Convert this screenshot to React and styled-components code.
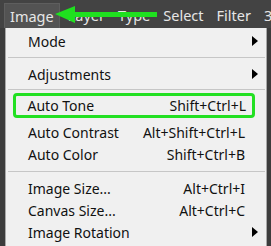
import React from "react";
import styled, { createGlobalStyle } from "styled-components";

const Global = createGlobalStyle`
  html, body { margin: 0; padding: 0; background: #3c3c3c; }
  body { width: 271px; height: 246px; overflow: hidden; font-family: "Noto Sans", "Open Sans", sans-serif; }
`;

const Screen = styled.div`
  position: relative;
  width: 271px;
  height: 246px;
  background: #3c3c3c;
  overflow: hidden;
`;

const MenuBar = styled.div`
  display: flex;
  align-items: center;
  height: 28px;
  padding-left: 4px;
  background: #434343;
  gap: 13px;
  white-space: nowrap;
  overflow: hidden;
`;

const BarItem = styled.div`
  height: 24px;
  margin-top: 2px;
  display: flex;
  align-items: center;
  flex-shrink: 0;
  padding: 0 ${(p) => (p.$active ? 5 : 0)}px;
  margin-right: ${(p) => (p.$active ? -5 : 0)}px;
  color: #e6e6e6;
  font-size: 14.5px;
  background: ${(p) => (p.$active ? "#535353" : "transparent")};
  border: 1px solid ${(p) => (p.$active ? "#5e5e5e" : "transparent")};
  border-bottom: none;
  ${(p) => !p.$active && "border: none;"}
`;

const Menu = styled.div`
  margin-left: 5px;
  width: 262px;
  box-sizing: border-box;
  background: #f0f0f0;
  border: 1px solid #a8a8a8;
  border-top: none;
  padding-top: 2px;
  height: 220px;
`;

const Row = styled.div`
  height: 22px;
  display: flex;
  align-items: center;
  padding-left: 22px;
  padding-right: 21px;
  font-size: 14px;
  color: #111;
  position: relative;
`;

const Label = styled.span`
  flex: 1;
  white-space: nowrap;
`;

const Shortcut = styled.span`
  white-space: nowrap;
`;

const Arrow = styled.span`
  position: absolute;
  right: 8px;
  top: 6px;
  width: 0;
  height: 0;
  border-top: 5px solid transparent;
  border-bottom: 5px solid transparent;
  border-left: 6px solid #000;
`;

const Separator = styled.div`
  height: ${(p) => p.$h}px;
  display: flex;
  align-items: center;
  padding: 0 1px 0 2px;
  box-sizing: border-box;
  &::after {
    content: "";
    flex: 1;
    height: 1px;
    background: #c6c6c6;
  }
`;

const Highlight = styled.div`
  margin: 0 11px 3px 7px;
  height: 25px;
  box-sizing: border-box;
  border: 3.5px solid #22e022;
  border-radius: 4px;
  display: flex;
  align-items: center;
  padding-left: 11.5px;
  padding-right: 6px;
  font-size: 14px;
  color: #111;
`;

const ArrowSvg = styled.svg`
  position: absolute;
  left: 53px;
  top: 5px;
`;

function Item({ label, shortcut, sub }) {
  return (
    <Row>
      <Label>{label}</Label>
      {shortcut && <Shortcut>{shortcut}</Shortcut>}
      {sub && <Arrow />}
    </Row>
  );
}

export default function App() {
  return (
    <Screen>
      <Global />
      <MenuBar>
        <BarItem $active>Image</BarItem>
        <BarItem>Layer</BarItem>
        <BarItem>Type</BarItem>
        <BarItem>Select</BarItem>
        <BarItem>Filter</BarItem>
        <BarItem>3D</BarItem>
      </MenuBar>
      <Menu>
        <Item label="Mode" sub />
        <Separator $h={11} />
        <Item label="Adjustments" sub />
        <Separator $h={8} />
        <Highlight>
          <Label>Auto Tone</Label>
          <Shortcut>Shift+Ctrl+L</Shortcut>
        </Highlight>
        <Item label="Auto Contrast" shortcut="Alt+Shift+Ctrl+L" />
        <Item label="Auto Color" shortcut="Shift+Ctrl+B" />
        <Separator $h={12} />
        <Item label="Image Size..." shortcut="Alt+Ctrl+I" />
        <Item label="Canvas Size..." shortcut="Alt+Ctrl+C" />
        <Item label="Image Rotation" sub />
      </Menu>
      <ArrowSvg width="106" height="20" viewBox="0 0 106 20">
        <polygon points="2,9 22,1 22,7 104,7 104,12 22,12 22,18" fill="#1fe01f" />
      </ArrowSvg>
    </Screen>
  );
}
